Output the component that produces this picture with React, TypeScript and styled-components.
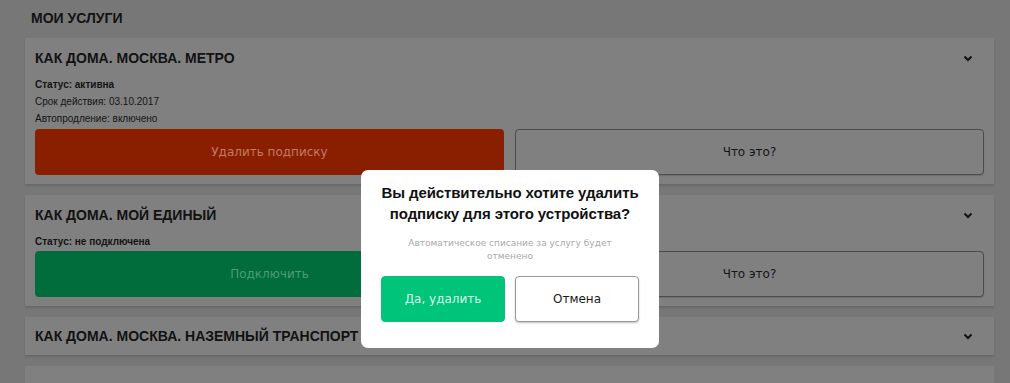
import React from "react";
import styled, { createGlobalStyle } from "styled-components";

const GlobalStyle = createGlobalStyle`
  html, body {
    margin: 0;
    padding: 0;
    background: #777777;
    font-family: "Liberation Sans", Arial, sans-serif;
    color: #111;
  }
  * { box-sizing: border-box; }
`;

const Page = styled.div`
  position: relative;
  width: 1010px;
  height: 383px;
  overflow: hidden;
  padding: 9px 16px 0 25px;
`;

const Heading = styled.h1`
  margin: 0 0 11px 6px;
  font-size: 14px;
  line-height: 18px;
  font-weight: bold;
  color: #121212;
`;

const List = styled.div`
  display: flex;
  flex-direction: column;
  gap: 11px;
`;

const Card = styled.section<{ $compact?: boolean }>`
  background: #808080;
  padding: ${(p) => (p.$compact ? "11px 10px 11px" : "12px 10px 9px")};
  box-shadow: 0 2px 2px rgba(0, 0, 0, 0.12);
`;

const CardHead = styled.div`
  display: flex;
  align-items: center;
  justify-content: space-between;
  height: 16px;
`;

const Title = styled.h2`
  margin: 0;
  font-size: 14px;
  font-weight: bold;
  color: #121212;
`;

const Chevron = styled.svg`
  width: 10px;
  height: 7px;
  margin-right: 11px;
`;

const Info = styled.div`
  margin-top: 10px;
  display: flex;
  flex-direction: column;
`;

const InfoLine = styled.div<{ $bold?: boolean }>`
  font-size: 10px;
  line-height: 17px;
  font-weight: ${(p) => (p.$bold ? "bold" : "normal")};
  color: #141414;
`;

const Actions = styled.div<{ $gap: number }>`
  display: grid;
  grid-template-columns: 1fr 1fr;
  gap: 11px;
  margin-top: ${(p) => p.$gap}px;
`;

const Btn = styled.button<{ $variant: "red" | "green" | "outline" }>`
  height: 46px;
  border-radius: 4px;
  font-family: "DejaVu Sans", Verdana, sans-serif;
  font-size: 12px;
  border: 1px solid
    ${(p) => (p.$variant === "outline" ? "#4c4c4c" : "transparent")};
  background: ${(p) =>
    p.$variant === "red" ? "#8a1f00" : p.$variant === "green" ? "#016c3c" : "#808080"};
  color: ${(p) =>
    p.$variant === "red" ? "#c07a68" : p.$variant === "green" ? "#4a9e76" : "#151515"};
  box-shadow: ${(p) => (p.$variant === "outline" ? "0 1px 1px rgba(0,0,0,0.15)" : "none")};
`;

const Placeholder = styled.div`
  background: #808080;
  height: 30px;
`;

const Modal = styled.div`
  position: absolute;
  left: 361px;
  top: 170px;
  width: 298px;
  height: 178px;
  background: #ffffff;
  border-radius: 7px;
  padding: 12px 20px 0;
  display: flex;
  flex-direction: column;
  align-items: center;
  text-align: center;
`;

const ModalTitle = styled.div`
  font-size: 15px;
  font-weight: bold;
  line-height: 21px;
  color: #111;
  white-space: nowrap;
  letter-spacing: -0.1px;
`;

const ModalText = styled.div`
  margin-top: 13px;
  font-family: "DejaVu Sans", Verdana, sans-serif;
  font-size: 9px;
  line-height: 13px;
  color: #a8a8a8;
  padding: 0 20px;
`;

const ModalActions = styled.div`
  margin-top: 13px;
  width: 100%;
  display: grid;
  grid-template-columns: 1fr 1fr;
  gap: 10px;
`;

const ModalBtn = styled.button<{ $primary?: boolean }>`
  height: 46px;
  border-radius: 4px;
  font-family: "DejaVu Sans", Verdana, sans-serif;
  font-size: 12px;
  border: 1px solid ${(p) => (p.$primary ? "#00c47a" : "#9a9a9a")};
  background: ${(p) => (p.$primary ? "#00c47a" : "#ffffff")};
  color: ${(p) => (p.$primary ? "#d8f7e8" : "#1a1a1a")};
  box-shadow: ${(p) => (p.$primary ? "none" : "0 1px 2px rgba(0,0,0,0.25)")};
`;

const ChevronIcon = () => (
  <Chevron viewBox="0 0 10 7">
    <path d="M1.5 1.5 L5 5 L8.5 1.5" fill="none" stroke="#111" strokeWidth="2" />
  </Chevron>
);

export default function App() {
  return (
    <>
      <GlobalStyle />
      <Page>
        <Heading>МОИ УСЛУГИ</Heading>
        <List>
          <Card>
            <CardHead>
              <Title>КАК ДОМА. МОСКВА. МЕТРО</Title>
              <ChevronIcon />
            </CardHead>
            <Info>
              <InfoLine $bold>Статус: активна</InfoLine>
              <InfoLine>Срок действия: 03.10.2017</InfoLine>
              <InfoLine>Автопродление: включено</InfoLine>
            </Info>
            <Actions $gap={2}>
              <Btn $variant="red">Удалить подписку</Btn>
              <Btn $variant="outline">Что это?</Btn>
            </Actions>
          </Card>
          <Card>
            <CardHead>
              <Title>КАК ДОМА. МОЙ ЕДИНЫЙ</Title>
              <ChevronIcon />
            </CardHead>
            <Info>
              <InfoLine $bold>Статус: не подключена</InfoLine>
            </Info>
            <Actions $gap={1}>
              <Btn $variant="green">Подключить</Btn>
              <Btn $variant="outline">Что это?</Btn>
            </Actions>
          </Card>
          <Card $compact>
            <CardHead>
              <Title>КАК ДОМА. МОСКВА. НАЗЕМНЫЙ ТРАНСПОРТ</Title>
              <ChevronIcon />
            </CardHead>
          </Card>
          <Placeholder />
        </List>
        <Modal>
          <ModalTitle>
            Вы действительно хотите удалить
            <br />
            подписку для этого устройства?
          </ModalTitle>
          <ModalText>Автоматическое списание за услугу будет отменено</ModalText>
          <ModalActions>
            <ModalBtn $primary>Да, удалить</ModalBtn>
            <ModalBtn>Отмена</ModalBtn>
          </ModalActions>
        </Modal>
      </Page>
    </>
  );
}
